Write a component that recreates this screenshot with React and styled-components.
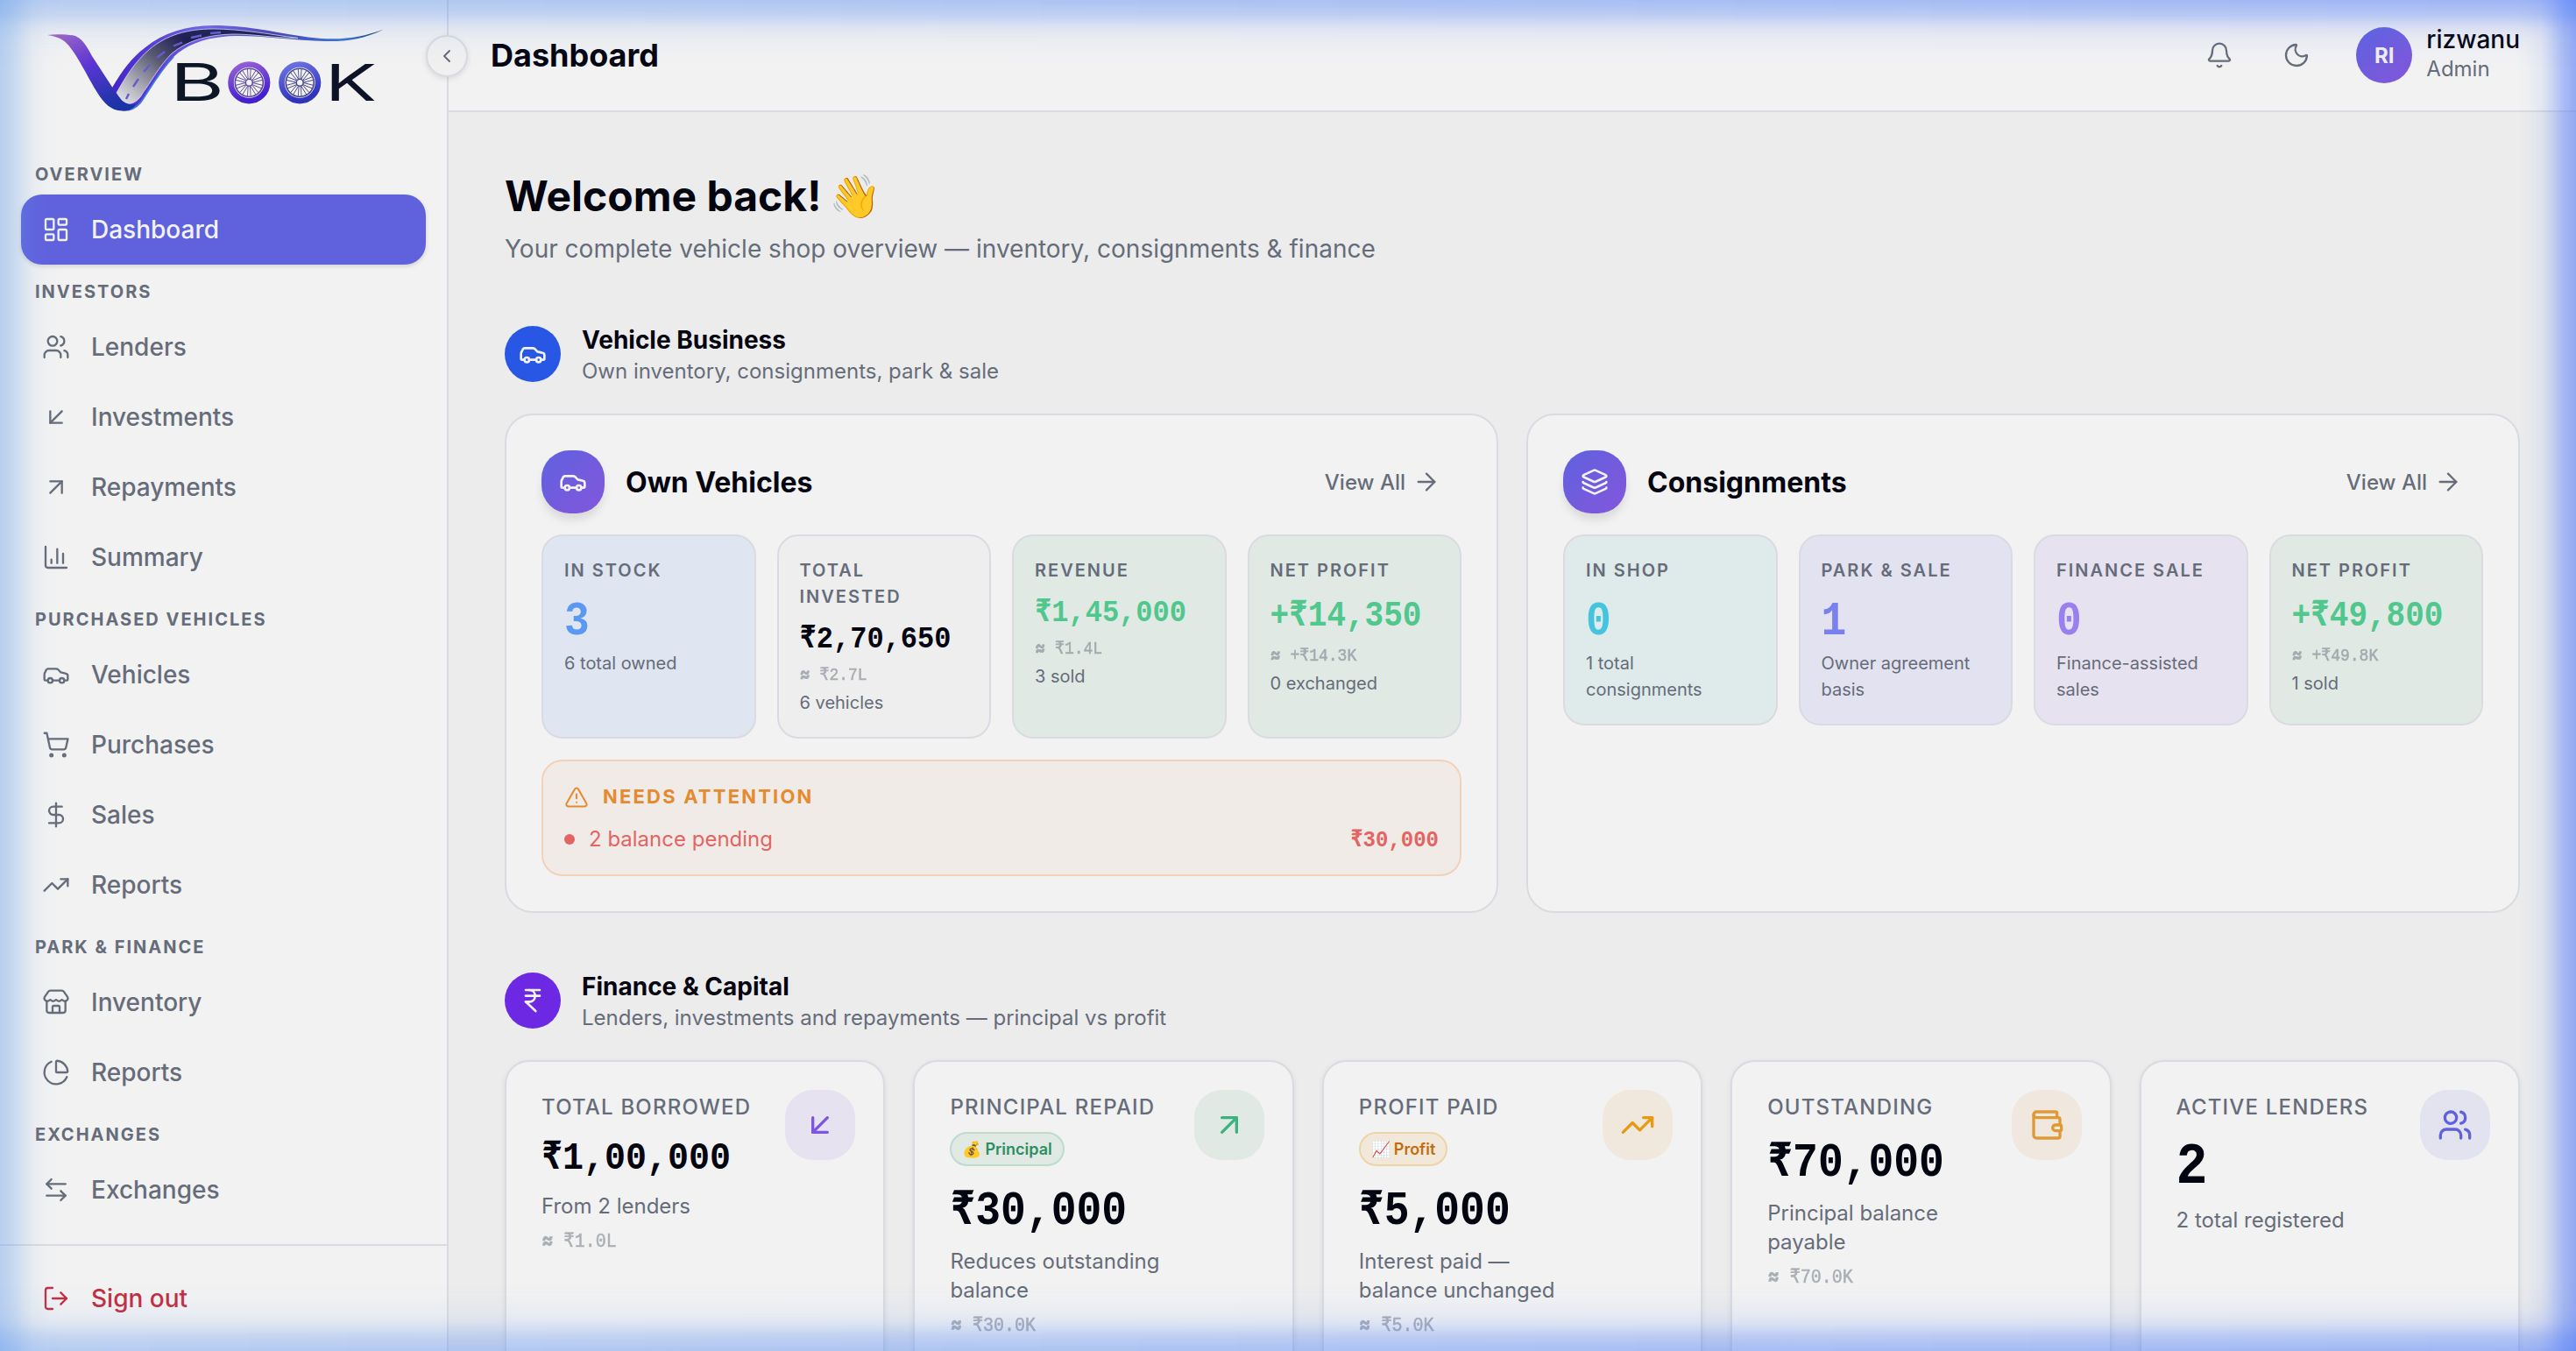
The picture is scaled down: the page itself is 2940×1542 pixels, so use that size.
import React from "react";
import styled, { createGlobalStyle, css } from "styled-components";
import {
  ArrowDownLeft,
  ArrowLeftRight,
  ArrowRight,
  ArrowUpRight,
  Bell,
  Car,
  ChartColumn,
  ChartPie,
  ChevronLeft,
  DollarSign,
  IndianRupee,
  Layers,
  LayoutDashboard,
  LogOut,
  Moon,
  ShoppingCart,
  Store,
  TrendingUp,
  TriangleAlert,
  Users,
  Wallet,
} from "lucide-react";

const GlobalStyle = createGlobalStyle`
  * {
    box-sizing: border-box;
  }

  body {
    margin: 0;
    background: #ececec;
    color: #020410;
    font-family: Inter, "Liberation Sans", sans-serif;
    overflow: hidden;
  }

  h1, h2, h3, p {
    margin: 0;
  }
`;

const line = "#dadbe0";
const muted = "#666c7a";

const Shell = styled.div`
  display: grid;
  grid-template-columns: 512px 1fr;
  width: 2940px;
  height: 1542px;
  overflow: hidden;
  position: relative;
`;

/* ---------- sidebar ---------- */

const Sidebar = styled.aside`
  display: flex;
  flex-direction: column;
  position: relative;
  height: 1542px;
  background: #f2f2f2;
  border-right: 2px solid ${line};
`;

const Brand = styled.div`
  height: 168px;
  padding: 24px 0 0 48px;
`;

const CollapseButton = styled.button`
  position: absolute;
  top: 40px;
  right: -24px;
  display: flex;
  align-items: center;
  justify-content: center;
  width: 48px;
  height: 48px;
  padding: 0;
  border: 2px solid ${line};
  border-radius: 50%;
  background: #f0f0f0;
  color: ${muted};
  box-shadow: 0 2px 6px rgba(0, 0, 0, 0.1);
  z-index: 2;
`;

const Nav = styled.nav`
  flex: 1;
  padding: 0 24px;
`;

const NavTitle = styled.div`
  display: flex;
  align-items: center;
  height: 54px;
  padding: 7px 16px 0;
  font-size: 20px;
  font-weight: 700;
  letter-spacing: 0.1em;
  color: ${muted};
`;

const NavItem = styled.a`
  display: flex;
  align-items: center;
  gap: 24px;
  height: 80px;
  padding: 0 24px;
  border-radius: 24px;
  font-size: 28px;
  font-weight: 500;
  color: ${(p) => (p.$danger ? "#c22f42" : muted)};

  ${(p) =>
    p.$active &&
    css`
      background: #6062dd;
      color: #f2f2f2;
      box-shadow: 0 2px 5px rgba(0, 0, 0, 0.14);
    `}
`;

const SidebarFooter = styled.div`
  height: 122px;
  padding: 20px 24px 0;
  border-top: 2px solid ${line};
`;

/* ---------- top bar ---------- */

const Content = styled.div`
  display: flex;
  flex-direction: column;
  min-width: 0;
`;

const TopBar = styled.header`
  display: flex;
  align-items: center;
  flex-shrink: 0;
  height: 128px;
  padding: 0 64px 0 48px;
  background: #f2f2f2;
  border-bottom: 2px solid ${line};
`;

const PageTitle = styled.h2`
  flex: 1;
  font-size: 36px;
  font-weight: 700;
`;

const IconButton = styled.span`
  display: flex;
  align-items: center;
  justify-content: center;
  width: 72px;
  height: 72px;
  margin-right: 16px;
  color: ${muted};
`;

const Avatar = styled.div`
  display: flex;
  align-items: center;
  justify-content: center;
  width: 64px;
  height: 64px;
  margin: 0 16px;
  border-radius: 50%;
  background: linear-gradient(135deg, #5f62e0, #8456da);
  color: #eeeef6;
  font-size: 24px;
  font-weight: 700;
`;

const UserText = styled.div`
  margin-top: -5px;
`;

const UserName = styled.div`
  font-size: 28px;
  line-height: 36px;
  font-weight: 500;
`;

const UserRole = styled.div`
  font-size: 24px;
  line-height: 32px;
  color: ${muted};
`;

/* ---------- main ---------- */

const Main = styled.main`
  flex: 1;
  padding: 64px 64px 0;
`;

const Welcome = styled.h1`
  display: flex;
  align-items: center;
  gap: 9px;
  font-size: 48px;
  line-height: 64px;
  font-weight: 700;
`;

const Lead = styled.p`
  margin-top: 8px;
  font-size: 28px;
  line-height: 40px;
  color: ${muted};
`;

const SectionHead = styled.div`
  display: flex;
  align-items: center;
  gap: 24px;
  height: 72px;
  margin: 64px 0 32px;
`;

const SectionIcon = styled.div`
  display: flex;
  align-items: center;
  justify-content: center;
  width: 64px;
  height: 64px;
  border-radius: 50%;
  background: ${(p) => p.$color};
  color: #f2f2f2;
`;

const SectionTitle = styled.h2`
  font-size: 28px;
  line-height: 40px;
  font-weight: 700;
`;

const SectionText = styled.p`
  font-size: 24px;
  line-height: 32px;
  color: ${muted};
`;

const PanelGrid = styled.div`
  display: grid;
  grid-template-columns: 1fr 1fr;
  gap: 32px;
`;

const Panel = styled.section`
  height: 570px;
  padding: 40px;
  border: 2px solid ${line};
  border-radius: 32px;
  background: #f2f2f2;
`;

const PanelHead = styled.div`
  display: flex;
  align-items: center;
  gap: 24px;
  margin-bottom: 24px;
  padding-right: 24px;
`;

const PanelIcon = styled.div`
  display: flex;
  align-items: center;
  justify-content: center;
  width: 72px;
  height: 72px;
  border-radius: 32px;
  background: linear-gradient(135deg, #5f62e0, #8456da);
  color: #f2f2f2;
  box-shadow: 0 8px 12px -2px rgba(0, 0, 0, 0.12);
`;

const PanelTitle = styled.h3`
  flex: 1;
  font-size: 32px;
  font-weight: 700;
`;

const ViewAll = styled.a`
  display: flex;
  align-items: center;
  gap: 8px;
  font-size: 24px;
  font-weight: 500;
  color: ${muted};
`;

const TileGrid = styled.div`
  display: grid;
  grid-template-columns: repeat(4, 1fr);
  gap: 24px;
`;

const Tile = styled.div`
  padding: 24px;
  border: 2px solid ${line};
  border-radius: 24px;
  background: ${(p) => p.$bg};
`;

const TileLabel = styled.div`
  font-size: 20px;
  line-height: 30px;
  font-weight: 600;
  letter-spacing: 0.1em;
  color: ${muted};
`;

// tall, narrow figures: stretched upwards from the baseline
const mono = css`
  font-family: "Liberation Mono", monospace;
  transform-origin: 0 calc(50% + 0.2665em);
  transform: translateY(0.0935em) scaleY(1.11);
  white-space: pre;
`;

const TileValue = styled.div`
  margin-top: 8px;
  font-size: ${(p) => p.$size}px;
  line-height: ${(p) => ({ 32: 48, 36: 56, 48: 64 })[p.$size]}px;
  font-weight: 700;
  color: ${(p) => p.$color};
  ${mono}
`;

const TileApprox = styled.div`
  margin-top: 4px;
  font-size: 18px;
  line-height: 27px;
  color: ${muted};
  -webkit-text-stroke: 0.5px ${muted};
  opacity: 0.5;
  ${mono}
`;

const Tilde = styled.span`
  display: inline-block;
  width: 0.68em;
  line-height: 1;
  font-family: Inter, sans-serif;
  font-weight: 800;
`;

const TileNote = styled.div`
  margin-top: 4px;
  font-size: 20px;
  line-height: 30px;
  color: ${muted};
`;

const Attention = styled.div`
  margin-top: 24px;
  padding: 24px 24px 22px;
  border: 2px solid #f1d2b8;
  border-radius: 24px;
  background: #f1ebe7;
`;

const AttentionTitle = styled.div`
  display: flex;
  align-items: center;
  gap: 16px;
  margin-bottom: 14px;
  font-size: 22px;
  line-height: 33px;
  font-weight: 700;
  letter-spacing: 0.1em;
  color: #e68a30;
`;

const AttentionRow = styled.div`
  display: flex;
  align-items: center;
  gap: 16px;
  font-size: 24px;
  line-height: 36px;
  color: #e36463;
`;

const Dot = styled.span`
  width: 12px;
  height: 12px;
  border-radius: 50%;
  background: #e36463;
`;

const AttentionAmount = styled.span`
  margin-left: auto;
  font-weight: 600;
  ${mono}
`;

/* ---------- finance cards ---------- */

const StatGrid = styled.div`
  display: grid;
  grid-template-columns: repeat(5, 1fr);
  gap: 32px;
`;

const Stat = styled.div`
  display: flex;
  justify-content: space-between;
  align-items: flex-start;
  height: 400px;
  padding: 32px 32px 0 40px;
  border: 2px solid ${line};
  border-radius: 28px;
  background: #f2f2f2;
  box-shadow: 0 2px 6px rgba(0, 0, 0, 0.08);
`;

const StatBody = styled.div`
  width: 248px;
`;

const StatIcon = styled.div`
  display: flex;
  align-items: center;
  justify-content: center;
  flex-shrink: 0;
  width: 80px;
  height: 80px;
  border-radius: 32px;
  background: ${(p) => p.$bg};
  color: ${(p) => p.$color};
`;

const StatLabel = styled.div`
  font-size: 24px;
  line-height: 40px;
  font-weight: 500;
  letter-spacing: 0.05em;
  white-space: nowrap;
  color: ${muted};
`;

const Badge = styled.div`
  display: flex;
  align-items: center;
  gap: 4px;
  width: max-content;
  height: 39px;
  margin: 8px 0 16px;
  padding: 0 12px;
  border: 2px solid ${(p) => p.$line};
  border-radius: 20px;
  background: ${(p) => p.$bg};
  color: ${(p) => p.$color};
  font-size: 18px;
  font-weight: 600;
`;

const StatValue = styled.div`
  margin-top: 8px;
  font-size: ${(p) => p.$size}px;
  line-height: ${(p) => ({ 40: 56, 48: 64, 60: 72 })[p.$size]}px;
  font-weight: 700;
  ${mono}
`;

const StatNote = styled.div`
  margin-top: 12px;
  font-size: 24px;
  line-height: 33px;
  color: ${muted};
`;

const StatApprox = styled(TileApprox)`
  margin-top: 8px;
  font-size: 20px;
  line-height: 30px;
`;

/* ---------- glow round the window ---------- */

const fade =
  "#000 0, rgba(0,0,0,.72) 17px, rgba(0,0,0,.42) 27px, rgba(0,0,0,.27) 33px, rgba(0,0,0,.12) 44px, rgba(0,0,0,.04) 60px, transparent 78px";
const fadeSide =
  "#000 0, rgba(0,0,0,.76) 14px, rgba(0,0,0,.56) 22px, rgba(0,0,0,.37) 29px, rgba(0,0,0,.15) 39px, rgba(0,0,0,.04) 54px, transparent 70px";

const Glow = styled.div`
  position: absolute;
  pointer-events: none;
  z-index: 5;

  ${(p) =>
    (p.$side === "top" || p.$side === "bottom") &&
    css`
      left: 0;
      right: 0;
      ${p.$side}: 0;
      height: 80px;
      background: linear-gradient(to right, rgba(92, 148, 238, 0.4), rgba(75, 120, 248, 0.5));
      mask-image: linear-gradient(to ${p.$side === "top" ? "bottom" : "top"}, ${fade});
    `}

  ${(p) =>
    (p.$side === "left" || p.$side === "right") &&
    css`
      top: 0;
      bottom: 0;
      ${p.$side}: 0;
      width: 70px;
      background: ${p.$side === "left" ? "rgba(95, 155, 235, 0.4)" : "rgba(85, 124, 247, 0.6)"};
      mask-image: linear-gradient(to ${p.$side === "left" ? "right" : "left"}, ${fadeSide});
    `}
`;

const Wheel = ({ cx, cy, fill, rim }) => (
  <g transform={`translate(${cx} ${cy})`}>
    <circle r="20.8" fill="#f2f2f2" stroke={fill} strokeWidth="6.6" />
    <circle r="16" fill="none" stroke={rim} strokeWidth="1.6" />
    <circle r="4" fill="none" stroke={rim} strokeWidth="1.6" />
    {Array.from({ length: 10 }, (_, i) => (
      <path
        key={i}
        d="M-1.1 -4.5 L-1.9 -15.5 M1.1 -4.5 L1.9 -15.5"
        stroke={rim}
        strokeWidth="0.9"
        transform={`rotate(${i * 36})`}
      />
    ))}
  </g>
);

const Logo = () => (
  <svg width="400" height="110" viewBox="48 24 400 110">
    <defs>
      <linearGradient id="leg" x1="0" y1="0" x2="0.6" y2="1">
        <stop offset="0" stopColor="#a669c4" />
        <stop offset="0.5" stopColor="#5b36d3" />
        <stop offset="1" stopColor="#1d34a6" />
      </linearGradient>
      <linearGradient id="band" gradientUnits="userSpaceOnUse" x1="130" y1="0" x2="438" y2="0">
        <stop offset="0" stopColor="#4526c9" />
        <stop offset="0.35" stopColor="#7560e6" />
        <stop offset="0.6" stopColor="#4a3fae" />
        <stop offset="0.85" stopColor="#3c74d8" />
        <stop offset="1" stopColor="#1c3c66" />
      </linearGradient>
      <linearGradient id="road" gradientUnits="userSpaceOnUse" x1="140" y1="118" x2="205" y2="40">
        <stop offset="0" stopColor="#e2e2e6" />
        <stop offset="0.3" stopColor="#a3a4b0" />
        <stop offset="0.62" stopColor="#5b5c72" />
        <stop offset="1" stopColor="#1b1b4a" />
      </linearGradient>
      <linearGradient id="wheelA" x1="0" y1="0" x2="0.3" y2="1">
        <stop offset="0" stopColor="#9a62d6" />
        <stop offset="1" stopColor="#4420cf" />
      </linearGradient>
      <linearGradient id="wheelB" x1="0" y1="0" x2="0.3" y2="1">
        <stop offset="0" stopColor="#6e74e6" />
        <stop offset="1" stopColor="#2f33bd" />
      </linearGradient>
    </defs>
    <path
      d="M128 100 C140 80 150 66 166 54 C186 38 212 29 243 29 C286 29 318 38 352 42.500 C388 47 412 43 438 33.500 C414 45 396 47.500 371 47 C336 46 300 40.500 268 41 C236 42 214 50 198 65 C182 82 172 100 164 112 C158 122 150 127 140 126.500 Z"
      fill="url(#band)"
    />
    <path
      d="M198 65 C182 82 172 100 164 112 C160 119 154 124 146 126"
      fill="none"
      stroke="#3f7be0"
      strokeWidth="1.600"
    />
    <path
      d="M133 106 C142 90 154 70 171 56 C190 40 214 33 243 33 C276 33 306 39 340 43.500 C310 43 290 39 266 39 C236 39.500 212 47 195 62 C180 78 172 94 163 106 C158 116 150 120 142 118 Z"
      fill="url(#road)"
      stroke="#dcdcf2"
      strokeWidth="0.800"
    />
    <path
      d="M144 113 L147 107 M152 99 L158 90 M164 82 L171 74 M179 66 L188 59 M198 52.500 L208 48.500 M218 43 L230 40.500 M240 38 L252 37"
      fill="none"
      stroke="#6a58cf"
      strokeWidth="2.400"
    />
    <path
      d="M54 40 C64 38.500 76 39.500 83 40.300 C93 42 99 53 105 64 L133 107 C138 116 145 120 155 119 C152 125 146 127 139 126.500 C127 126 119 119 110 104 C98 84 84 54 72 46 C66 42 60 41 54 40 Z"
      fill="url(#leg)"
    />
    <text x="194" y="115" fontFamily="Inter" fontSize="59" fontWeight="400" fill="#0e1626" textLength="62" lengthAdjust="spacingAndGlyphs">
      B
    </text>
    <Wheel cx={284.3} cy={94.3} fill="url(#wheelA)" rim="#5d4a9e" />
    <Wheel cx={342.2} cy={94.3} fill="url(#wheelB)" rim="#4a4590" />
    <text x="371" y="115" fontFamily="Inter" fontSize="58" fontWeight="400" fill="#0e1226" textLength="59" lengthAdjust="spacingAndGlyphs">
      K
    </text>
  </svg>
);

const navGroups = [
  { title: "OVERVIEW", items: [{ label: "Dashboard", icon: LayoutDashboard, active: true }] },
  {
    title: "INVESTORS",
    items: [
      { label: "Lenders", icon: Users },
      { label: "Investments", icon: ArrowDownLeft },
      { label: "Repayments", icon: ArrowUpRight },
      { label: "Summary", icon: ChartColumn },
    ],
  },
  {
    title: "PURCHASED VEHICLES",
    items: [
      { label: "Vehicles", icon: Car },
      { label: "Purchases", icon: ShoppingCart },
      { label: "Sales", icon: DollarSign },
      { label: "Reports", icon: TrendingUp },
    ],
  },
  {
    title: "PARK & FINANCE",
    items: [
      { label: "Inventory", icon: Store },
      { label: "Reports", icon: ChartPie },
    ],
  },
  { title: "EXCHANGES", items: [{ label: "Exchanges", icon: ArrowLeftRight }] },
];

const green = { bg: "#e0e9e4", color: "#50c78d" };

const ownTiles = [
  { label: "IN STOCK", value: "3", size: 48, note: "6 total owned", bg: "#dfe5f1", color: "#5b98f2" },
  { label: "TOTAL INVESTED", value: "₹2,70,650", size: 32, approx: "₹2.7L", note: "6 vehicles", bg: "#eeeeee", color: "#020410" },
  { label: "REVENUE", value: "₹1,45,000", size: 32, approx: "₹1.4L", note: "3 sold", ...green },
  { label: "NET PROFIT", value: "+₹14,350", size: 36, approx: "+₹14.3K", note: "0 exchanged", ...green },
];

const consignmentTiles = [
  { label: "IN SHOP", value: "0", size: 48, note: "1 total consignments", bg: "#dfeaeb", color: "#45c4e0" },
  { label: "PARK & SALE", value: "1", size: 48, note: "Owner agreement basis", bg: "#e3e2f0", color: "#7980f0" },
  { label: "FINANCE SALE", value: "0", size: 48, note: "Finance-assisted sales", bg: "#e6e2f0", color: "#9a80ef" },
  { label: "NET PROFIT", value: "+₹49,800", size: 36, approx: "+₹49.8K", note: "1 sold", ...green },
];

const stats = [
  { label: "TOTAL BORROWED", value: "₹1,00,000", size: 40, note: "From 2 lenders", approx: "₹1.0L", icon: ArrowDownLeft, bg: "#e6e2f0", color: "#7c54e8" },
  {
    label: "PRINCIPAL REPAID",
    badge: { emoji: "💰", text: "Principal", bg: "#e0e9e4", line: "#bcdccd", color: "#2c8f60" },
    value: "₹30,000",
    size: 48,
    note: "Reduces outstanding balance",
    approx: "₹30.0K",
    icon: ArrowUpRight,
    bg: "#e0e9e4",
    color: "#3cb27c",
  },
  {
    label: "PROFIT PAID",
    badge: { emoji: "📈", text: "Profit", bg: "#f1e8d9", line: "#edd4a8", color: "#c46c0c" },
    value: "₹5,000",
    size: 48,
    note: "Interest paid — balance unchanged",
    approx: "₹5.0K",
    icon: TrendingUp,
    bg: "#f0e8dc",
    color: "#e79a14",
  },
  { label: "OUTSTANDING", value: "₹70,000", size: 48, note: "Principal balance payable", approx: "₹70.0K", icon: Wallet, bg: "#f0e8df", color: "#de9a35" },
  { label: "ACTIVE LENDERS", value: "2", size: 60, note: "2 total registered", icon: Users, bg: "#e3e3ef", color: "#6062dd" },
];

const VehiclePanel = ({ title, icon: Icon, tiles, children }) => (
  <Panel>
    <PanelHead>
      <PanelIcon>
        <Icon size={32} strokeWidth={2} />
      </PanelIcon>
      <PanelTitle>{title}</PanelTitle>
      <ViewAll>
        View All <ArrowRight size={32} strokeWidth={1.75} />
      </ViewAll>
    </PanelHead>
    <TileGrid>
      {tiles.map((t) => (
        <Tile key={t.label} $bg={t.bg}>
          <TileLabel>{t.label}</TileLabel>
          <TileValue $size={t.size} $color={t.color}>
            {t.value}
          </TileValue>
          {t.approx && (
            <TileApprox>
              <Tilde>≈</Tilde> {t.approx}
            </TileApprox>
          )}
          <TileNote>{t.note}</TileNote>
        </Tile>
      ))}
    </TileGrid>
    {children}
  </Panel>
);

const App = () => {
  return (
    <Shell>
      <GlobalStyle />
      <Sidebar>
        <Brand>
          <Logo />
        </Brand>
        <CollapseButton>
          <ChevronLeft size={24} strokeWidth={2} />
        </CollapseButton>
        <Nav>
          {navGroups.map((group) => (
            <React.Fragment key={group.title}>
              <NavTitle>{group.title}</NavTitle>
              {group.items.map(({ label, icon: Icon, active }) => (
                <NavItem key={label} $active={active}>
                  <Icon size={32} strokeWidth={1.75} />
                  {label}
                </NavItem>
              ))}
            </React.Fragment>
          ))}
        </Nav>
        <SidebarFooter>
          <NavItem $danger>
            <LogOut size={32} strokeWidth={1.75} />
            Sign out
          </NavItem>
        </SidebarFooter>
      </Sidebar>

      <Content>
        <TopBar>
          <PageTitle>Dashboard</PageTitle>
          <IconButton>
            <Bell size={32} strokeWidth={1.75} />
          </IconButton>
          <IconButton>
            <Moon size={32} strokeWidth={1.75} />
          </IconButton>
          <Avatar>RI</Avatar>
          <UserText>
            <UserName>rizwanu</UserName>
            <UserRole>Admin</UserRole>
          </UserText>
        </TopBar>

        <Main>
          <Welcome>
            Welcome back! <span>👋</span>
          </Welcome>
          <Lead>Your complete vehicle shop overview — inventory, consignments &amp; finance</Lead>

          <SectionHead>
            <SectionIcon $color="#2857e6">
              <Car size={32} strokeWidth={2} />
            </SectionIcon>
            <div>
              <SectionTitle>Vehicle Business</SectionTitle>
              <SectionText>Own inventory, consignments, park &amp; sale</SectionText>
            </div>
          </SectionHead>
          <PanelGrid>
            <VehiclePanel title="Own Vehicles" icon={Car} tiles={ownTiles}>
              <Attention>
                <AttentionTitle>
                  <TriangleAlert size={28} strokeWidth={1.75} />
                  NEEDS ATTENTION
                </AttentionTitle>
                <AttentionRow>
                  <Dot />
                  2 balance pending
                  <AttentionAmount>₹30,000</AttentionAmount>
                </AttentionRow>
              </Attention>
            </VehiclePanel>
            <VehiclePanel title="Consignments" icon={Layers} tiles={consignmentTiles} />
          </PanelGrid>

          <SectionHead>
            <SectionIcon $color="#6d28e4">
              <IndianRupee size={32} strokeWidth={2} />
            </SectionIcon>
            <div>
              <SectionTitle>Finance &amp; Capital</SectionTitle>
              <SectionText>Lenders, investments and repayments — principal vs profit</SectionText>
            </div>
          </SectionHead>
          <StatGrid>
            {stats.map(({ icon: Icon, ...s }) => (
              <Stat key={s.label}>
                <StatBody>
                  <StatLabel>{s.label}</StatLabel>
                  {s.badge && (
                    <Badge $bg={s.badge.bg} $line={s.badge.line} $color={s.badge.color}>
                      <span>{s.badge.emoji}</span>
                      {s.badge.text}
                    </Badge>
                  )}
                  <StatValue $size={s.size}>{s.value}</StatValue>
                  <StatNote>{s.note}</StatNote>
                  {s.approx && (
                    <StatApprox>
                      <Tilde>≈</Tilde> {s.approx}
                    </StatApprox>
                  )}
                </StatBody>
                <StatIcon $bg={s.bg} $color={s.color}>
                  <Icon size={40} strokeWidth={2} />
                </StatIcon>
              </Stat>
            ))}
          </StatGrid>
        </Main>
      </Content>

      <Glow $side="left" />
      <Glow $side="right" />
      <Glow $side="top" />
      <Glow $side="bottom" />
    </Shell>
  );
};

export default App;
